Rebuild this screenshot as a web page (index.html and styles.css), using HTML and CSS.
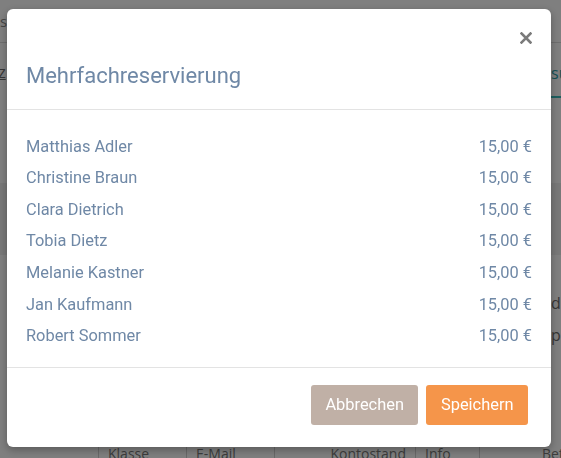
FILE: index.html
```html
<!DOCTYPE html>
<html lang="de">

<head>
    <meta charset="UTF-8">
    <meta name="viewport" content="width=device-width, initial-scale=1.0">
    <title>Mehrfachreservierung</title>
    <link rel="stylesheet" href="styles.css">
</head>

<body>
    <div class="page">
        <div class="topbar">
            <span class="crumb">sportverein</span>
        </div>

        <div class="tabs">
            <a class="tab tab-left" href="#">Platz</a>
            <span class="tab tab-active">sübersicht</span>
        </div>

        <div class="band"></div>

        <div class="side-lines">
            <span></span><span class="side-text">details</span>
            <span></span><span class="side-text">personen</span>
        </div>

        <div class="table-head">
            <div class="th"></div>
            <div class="th">Klasse</div>
            <div class="th">E-Mail</div>
            <div class="th th-right">Kontostand</div>
            <div class="th">Info</div>
            <div class="th th-wide">Betrag</div>
        </div>
    </div>

    <div class="backdrop"></div>

    <div class="modal">
        <div class="modal-header">
            <div class="close-row">
                <button class="close" type="button" aria-label="Schließen">
                    <svg width="12" height="12" viewBox="0 0 12 12">
                        <path d="M1.5 1.5 L10.5 10.5 M10.5 1.5 L1.5 10.5" stroke="#7b7b7b" stroke-width="2.6" stroke-linecap="square" fill="none" />
                    </svg>
                </button>
            </div>
            <h4 class="modal-title">Mehrfachreservierung</h4>
        </div>

        <div class="modal-body">
            <div class="row"><span>Matthias Adler</span><span>15,00 €</span></div>
            <div class="row"><span>Christine Braun</span><span>15,00 €</span></div>
            <div class="row"><span>Clara Dietrich</span><span>15,00 €</span></div>
            <div class="row"><span>Tobia Dietz</span><span>15,00 €</span></div>
            <div class="row"><span>Melanie Kastner</span><span>15,00 €</span></div>
            <div class="row"><span>Jan Kaufmann</span><span>15,00 €</span></div>
            <div class="row"><span>Robert Sommer</span><span>15,00 €</span></div>
        </div>

        <div class="modal-footer">
            <button class="btn btn-cancel" type="button">Abbrechen</button>
            <button class="btn btn-save" type="button">Speichern</button>
        </div>
    </div>
</body>

</html>
```

FILE: styles.css
```css
body {
    margin: 0;
    height: 458px;
    overflow: hidden;
    font-family: "Open Sans", sans-serif;
    font-size: 16px;
    color: #7c7c7c;
    background: #fff;
}

/* page behind the dialog */
.topbar {
    height: 42px;
    display: flex;
    align-items: center;
    border-bottom: 1px solid #dcdcdc;
    font-size: 15px;
    color: #8a8a8a;
}

.tabs {
    display: grid;
    grid-template-columns: 551px 1fr;
    height: 55px;
    overflow: hidden;
}

.tab {
    display: flex;
    align-items: center;
    white-space: nowrap;
    color: #6e6e6e;
}

.tab-left {
    margin-left: -30px;
    text-decoration: underline;
    padding-top: 2px;
}

.tab-active {
    color: #2f9fa8;
    padding-top: 6px;
    border-bottom: 2px solid #3cbdbd;
}

.band {
    height: 72px;
    margin-top: 85px;
    background: #f1f1f1;
}

.side-lines {
    display: grid;
    grid-template-columns: 551px 1fr;
    margin-top: 32px;
    line-height: 32px;
    color: #6e6e6e;
    white-space: nowrap;
}

.table-head {
    display: grid;
    grid-template-columns: 98px 88px 88px 141px 64px 1fr;
    margin-top: 91px;
    font-size: 14px;
    line-height: 24px;
    color: #7a7a7a;
    white-space: nowrap;
}

.th {
    padding: 0 9px;
    border-left: 1px solid #d2d2d2;
}

.th:first-child {
    border-left: none;
}

.th-right {
    text-align: right;
}

.th-wide {
    padding-left: 62px;
}

.backdrop {
    position: fixed;
    inset: 0;
    background: rgba(0, 0, 0, 0.5);
}

/* dialog */
.modal {
    position: fixed;
    left: 7px;
    top: 9px;
    width: 544px;
    height: 438px;
    display: flex;
    flex-direction: column;
    background: #fff;
    border-radius: 6px;
    box-shadow: 0 3px 9px rgba(0, 0, 0, 0.3);
    font-family: Roboto, "Noto Sans", sans-serif;
    font-size: 16.4px;
    color: #6f88a6;
    overflow: hidden;
}

.modal-header {
    padding: 23px 19px 21px 19px;
    border-bottom: 1px solid #e3e3e3;
}

.close-row {
    display: flex;
    justify-content: flex-end;
    height: 12px;
}

.close {
    padding: 0;
    border: none;
    background: none;
    cursor: pointer;
    height: 12px;
}

.close svg {
    display: block;
}

.modal-title {
    margin: 20px 0 0;
    font-size: 22px;
    line-height: 24px;
    font-weight: 400;
}

.modal-body {
    padding: 20.7px 19px 15px 19px;
    border-bottom: 1px solid #e3e3e3;
}

.row {
    display: flex;
    justify-content: space-between;
    padding: 4px 0;
    line-height: 23.6px;
}

.modal-footer {
    display: flex;
    justify-content: flex-end;
    gap: 8px;
    padding: 17px 23px 22px;
}

.btn {
    height: 40px;
    padding: 0 14.5px;
    border: none;
    border-radius: 3px;
    font-family: Roboto, "Noto Sans", sans-serif;
    font-size: 16.4px;
    color: #fff;
    cursor: pointer;
}

.btn-cancel {
    background: #c0b0a6;
}

.btn-save {
    background: #f5954a;
}
```
